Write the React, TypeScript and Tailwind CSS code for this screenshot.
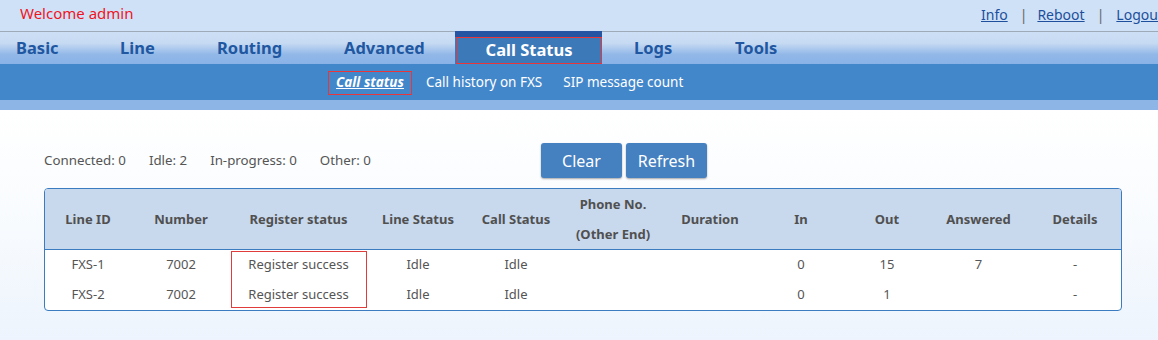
import React from "react";

const font = { fontFamily: '"Noto Sans", "Open Sans", Arial, sans-serif' };

const cols = [
  { w: 86, label: "Line ID" },
  { w: 100, label: "Number" },
  { w: 135, label: "Register status" },
  { w: 104, label: "Line Status" },
  { w: 92, label: "Call Status" },
  { w: 102, label: "Phone No.\n(Other End)" },
  { w: 92, label: "Duration" },
  { w: 90, label: "In" },
  { w: 82, label: "Out" },
  { w: 101, label: "Answered" },
  { w: 92, label: "Details" },
];

const rows = [
  ["FXS-1", "7002", "Register success", "Idle", "Idle", "", "", "0", "15", "7", "-"],
  ["FXS-2", "7002", "Register success", "Idle", "Idle", "", "", "0", "1", "", "-"],
];

export default function App() {
  return (
    <div className="w-[1158px] h-[340px] overflow-hidden bg-white" style={font}>
      {/* top bar */}
      <div className="h-[31px] bg-[#cfe1f6] flex items-center whitespace-nowrap">
        <div className="w-[981px] shrink-0 pl-[20px] text-[15px] text-[#f0141e] leading-none -mt-[5px]">Welcome admin</div>
        <div className="flex items-center shrink-0 text-[14px] text-[#1d4f9c] -mt-[2px]">
          <a className="underline">Info</a>
          <span className="ml-[12px] mr-[10px] text-[#666]">|</span>
          <a className="underline">Reboot</a>
          <span className="ml-[12px] mr-[12px] text-[#666]">|</span>
          <a className="underline">Logout</a>
        </div>
      </div>
      {/* main nav */}
      <div className="h-[33px] flex border-t border-[#9eaab8] bg-[linear-gradient(to_bottom,#cddff5_0%,#c6daf2_35%,#92b8e8_70%,#8ab2e6_100%)] text-[16.5px] font-bold text-[#2057a0]">
        <div className="w-[104px] pl-[16px] pt-[1px] flex items-center">Basic</div>
        <div className="w-[97px] pl-[16px] pt-[1px] flex items-center">Line</div>
        <div className="w-[127px] pl-[16px] pt-[1px] flex items-center">Routing</div>
        <div className="w-[127px] pl-[16px] pt-[1px] flex items-center">Advanced</div>
        <div className="w-[147px] -mt-px h-[33px] bg-[#3b79b9] border-t-[6px] border-[#2454a2]">
          <div className="h-[27px] ml-px border border-[#e8363a] text-white flex items-center justify-center">Call Status</div>
        </div>
        <div className="w-[117px] pl-[32px] pt-[1px] flex items-center">Logs</div>
        <div className="pl-[16px] pt-[1px] flex items-center">Tools</div>
      </div>
      {/* sub nav */}
      <div className="h-[36px] bg-[#4387cb] flex items-center text-[13.5px] text-white">
        <div className="ml-[328px] mt-[1px] w-[84px] h-[24px] border border-[#e8363a] flex items-center justify-center font-bold italic underline">Call status</div>
        <div className="ml-[14px]">Call history on FXS</div>
        <div className="ml-[21px]">SIP message count</div>
      </div>
      <div className="h-[10px] bg-[#8db5e6]" />
      {/* content */}
      <div className="h-[230px] bg-[linear-gradient(to_bottom,#ffffff_0%,#f8fbfe_50%,#edf4fd_100%)] pt-[33px]">
        <div className="flex items-center h-[35px]">
          <div className="w-[541px] pl-[44px] pt-[1px] flex gap-[23px] text-[13.3px] text-[#555]">
            <span>Connected: 0</span>
            <span>Idle: 2</span>
            <span>In-progress: 0</span>
            <span>Other: 0</span>
          </div>
          <button className="w-[81px] h-[35px] rounded-[3px] bg-[#4580c0] text-white text-[16px] shadow-[0_1px_2px_rgba(0,0,0,0.35)]">Clear</button>
          <button className="ml-[4px] w-[81px] h-[35px] rounded-[3px] bg-[#4580c0] text-white text-[16px] shadow-[0_1px_2px_rgba(0,0,0,0.35)]">Refresh</button>
        </div>
        <div className="relative ml-[44px] mt-[10px] w-[1078px] border border-[#3b7cc0] rounded-[4px] overflow-hidden bg-white">
          <table className="table-fixed w-full border-collapse text-[13px] text-[#555]">
            <colgroup>
              {cols.map((c, i) => (
                <col key={i} style={{ width: c.w }} />
              ))}
            </colgroup>
            <thead>
              <tr className="h-[60px] bg-[#c8d8ed] border-b border-[#3b7cc0]">
                {cols.map((c, i) => (
                  <th key={i} className="font-bold text-[#505050] text-center leading-[30px] p-0">
                    {c.label.split("\n").map((l, j) => (
                      <div key={j}>{l}</div>
                    ))}
                  </th>
                ))}
              </tr>
            </thead>
            <tbody>
              {rows.map((r, i) => (
                <tr key={i} className="h-[30px]">
                  {r.map((v, j) => (
                    <td key={j} className="text-center p-0">{v}</td>
                  ))}
                </tr>
              ))}
            </tbody>
          </table>
          <div className="absolute left-[186px] top-[62px] w-[136px] h-[57px] border border-[#e03c3c] pointer-events-none" />
        </div>
      </div>
    </div>
  );
}
